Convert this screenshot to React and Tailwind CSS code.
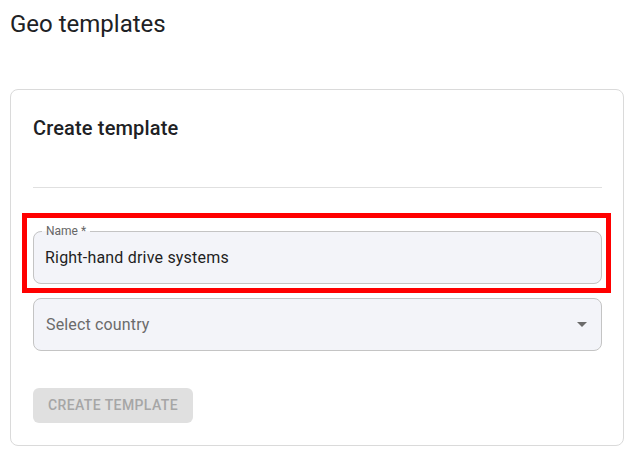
export default function App() {
  return (
    <div className="min-h-screen bg-white px-[10px] pt-[8px]" style={{ fontFamily: 'Roboto, "Noto Sans", sans-serif' }}>
      <h1 className="text-[24px] leading-[32px] font-normal text-[#202124]">Geo templates</h1>
      <div className="mt-[49px] w-[614px] rounded-[8px] border border-[#dadada] pl-[22px] pr-[21px] pt-[24px] pb-[22px]">
        <h2 className="text-[20px] leading-[28px] font-medium tracking-[0.15px] text-[#202124]">Create template</h2>
        <div className="mt-[45px] h-px bg-[#e0e0e0]" />
        <div className="relative mt-[43px] h-[53px]">
          <fieldset className="pointer-events-none absolute inset-x-0 bottom-0 top-[-6px] m-0 rounded-[8px] border border-[#c4c4c4] bg-[#f3f4f9] px-[8px] py-0">
            <legend className="px-[4px] text-[12px] leading-[12px] text-[#666666]">Name *</legend>
          </fieldset>
          <div className="relative flex h-full items-center px-[12px] text-[16px] tracking-[0.2px] text-[#1f1f1f]">Right-hand drive systems</div>
          <div className="pointer-events-none absolute left-[-11px] right-[-9px] top-[-18px] bottom-[-9px] border-[5px] border-[#ff0000]" />
        </div>
        <div className="mt-[14px] flex h-[53px] items-center justify-between rounded-[8px] border border-[#c4c4c4] bg-[#f3f4f9] pl-[12px] pr-[14px]">
          <span className="text-[16px] tracking-[0.15px] text-[#6b6b6b]">Select country</span>
          <svg width="10" height="5" viewBox="0 0 10 5" className="fill-[#6b6b6b]">
            <path d="M0 0l5 5 5-5z" />
          </svg>
        </div>
        <button className="mt-[37px] flex h-[35px] w-[160px] items-center justify-center rounded-[6px] bg-[#e0e0e0] text-[14px] font-medium uppercase tracking-[0.4px] text-[#a6a6a6]">
          Create template
        </button>
      </div>
    </div>
  );
}
